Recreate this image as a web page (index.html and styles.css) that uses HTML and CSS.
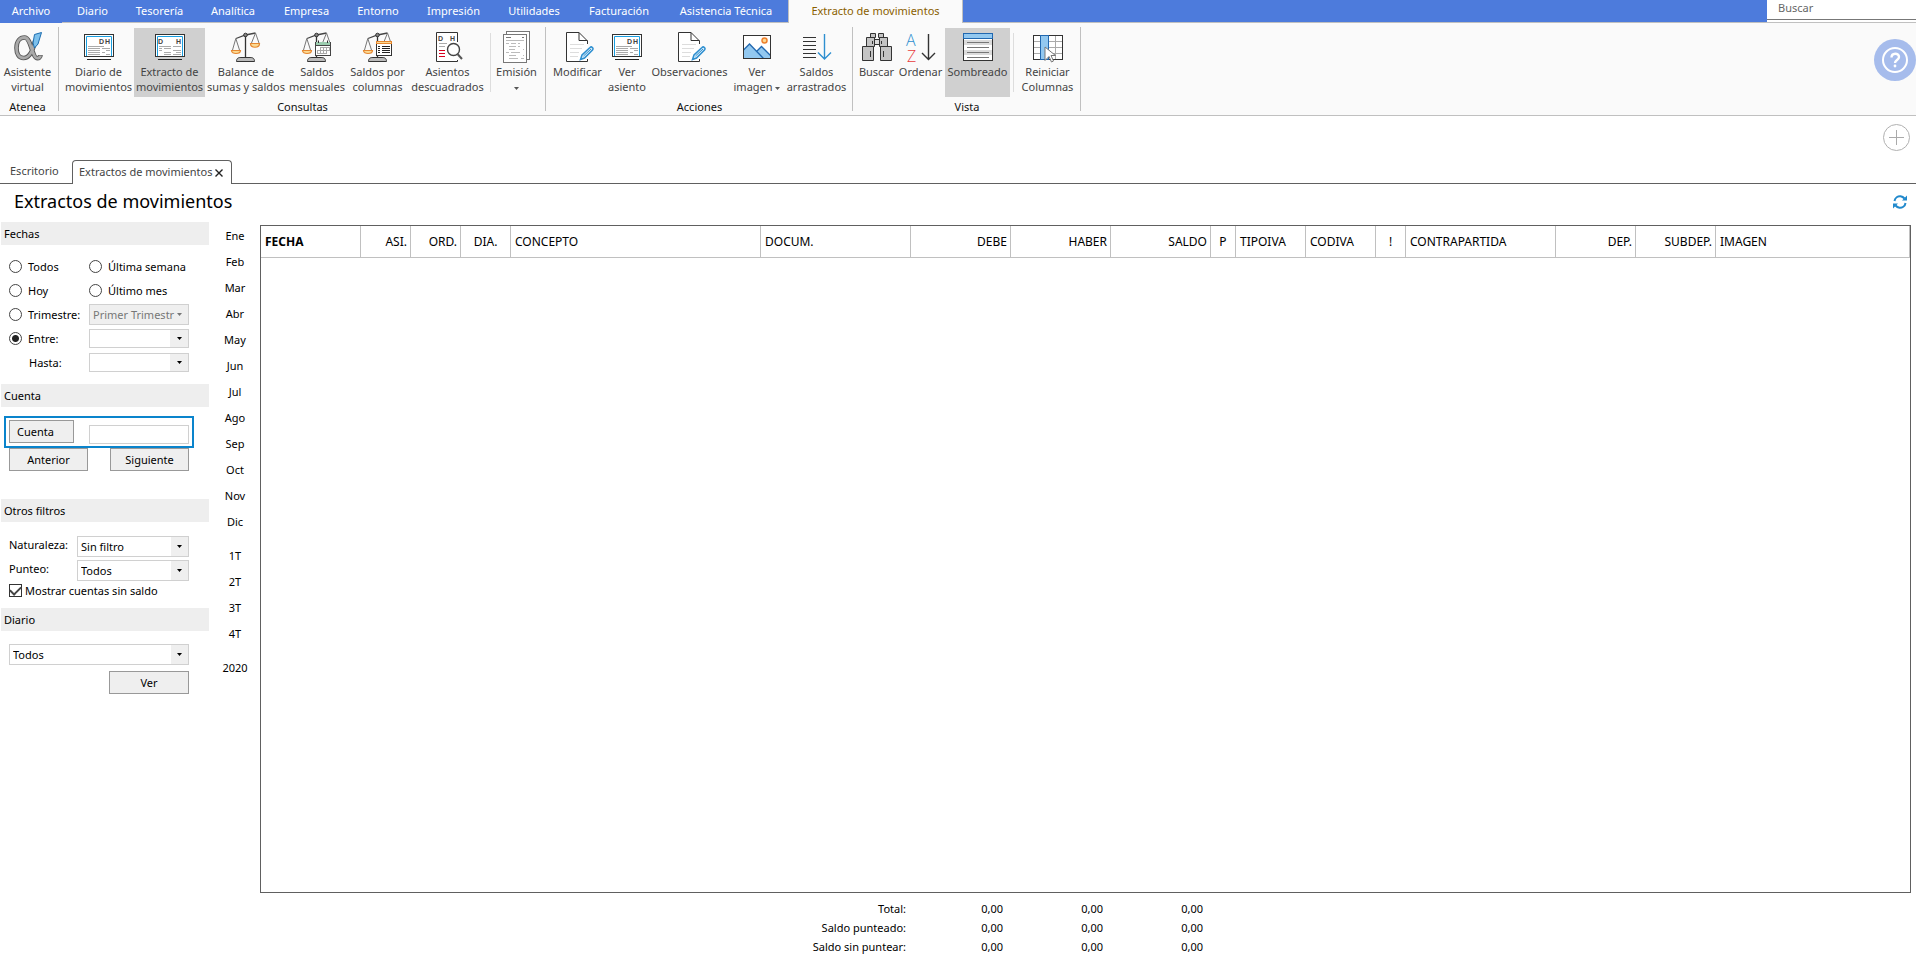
FILE: index.html
```html
<!DOCTYPE html>
<html lang="es">
<head>
<meta charset="utf-8">
<title>Extractos de movimientos</title>
<link rel="stylesheet" href="styles.css">
</head>
<body>
<svg class="defs" aria-hidden="true">
  <symbol id="entry-frame" viewBox="0 0 32 34">
    <rect x="1.500" y="4.500" width="29" height="22" fill="#fff" stroke="#333"/>
    <path d="M3.500 26V6.500H28.500V26" fill="none" stroke="#1a9fe0"/>
    <path d="M4 29.500H28" stroke="#222"/>
  </symbol>
  <symbol id="journal" viewBox="0 0 32 34">
    <use href="#entry-frame"/>
    <text x="16" y="14" class="mini">D</text><text x="22" y="14" class="mini">H</text>
    <path d="M5 16.500H21M5 18.500H17M19 18.500H27M5 20.500H17M5 22.500H17M23 20.500H27M19 22.500H22M5 24.500H17M23 24.500H27" stroke="#aaa"/>
  </symbol>
  <symbol id="ledger" viewBox="0 0 32 34">
    <use href="#entry-frame"/>
    <text x="4" y="14" class="mini">D</text><text x="22" y="14" class="mini">H</text>
    <path d="M5 16.500H17M19 16.500H27M5 18.500H8M10 18.500H17M19 20.500H27M5 20.500H8M10 22.500H17M10 24.500H17M19 24.500H27M22 22.500H27" stroke="#aaa"/>
  </symbol>
  <symbol id="scale-left" viewBox="0 0 32 34">
    <path d="M6 8.500L15.500 5L25.500 3" fill="none" stroke="#444" stroke-width="1.300"/>
    <path d="M5.800 8.500L2.500 20M5.800 8.500L9.500 20M25.500 3L21.500 13M25.500 3L29 13" fill="none" stroke="#777"/>
    <path d="M1.500 20.500H10.500C10.500 24.500 1.500 24.500 1.500 20.500Z" fill="#fbd992" stroke="#e58730" stroke-width="1.200"/>
    <path d="M15.500 5V27" stroke="#333" stroke-width="1.300"/>
    <circle cx="15.500" cy="5" r="1.800" fill="#888" stroke="#333"/>
    <path d="M6.500 31.500C6.500 28 8.500 27.500 11 27.500H20C22.500 27.500 24.500 28 24.500 31.500Z" fill="#bbb" stroke="#333"/>
  </symbol>
  <symbol id="scale" viewBox="0 0 32 34">
    <use href="#scale-left"/>
    <path d="M20.500 13.500H29.500C29.500 18.500 20.500 18.500 20.500 13.500Z" fill="#fbd992" stroke="#e58730" stroke-width="1.200"/>
  </symbol>
  <symbol id="scale-month" viewBox="0 0 32 34">
    <use href="#scale-left"/>
    <rect x="14.500" y="12.500" width="15" height="13" fill="#fff" stroke="#444"/>
    <rect x="15" y="12" width="14" height="3" fill="#9ccdb0"/>
    <path d="M14 15.500H30" stroke="#444"/>
    <path d="M17.500 10.500V13M26.500 10.500V13" stroke="#333"/>
    <path d="M19 17.500H28M16 20.500H28M16 23.500H25M16.500 20V24M19.500 17V24M22.500 17V24M25.500 17V24M28.500 17V21" fill="none" stroke="#aaa"/>
  </symbol>
  <symbol id="scale-columns" viewBox="0 0 32 34">
    <use href="#scale-left"/>
    <rect x="14.500" y="12.500" width="15" height="13" fill="#fff" stroke="#333"/>
    <rect x="14.500" y="11.500" width="15" height="2" fill="#fbd992" stroke="#e58730"/>
    <path d="M16 16.500H18M20 16.500H28M16 18.500H18M20 18.500H28M16 20.500H18M20 20.500H28M16 22.500H18M20 22.500H28" stroke="#222"/>
  </symbol>
  <symbol id="unbalanced" viewBox="0 0 32 34">
    <path d="M25.500 12V2.500H4.500V31.500H25.500V30" fill="#fff" stroke="#333"/>
    <text x="6" y="11" class="mini">D</text><text x="18" y="11" class="mini">H</text>
    <path d="M7 13.500H15M7 16.500H13" stroke="#aaa"/>
    <path d="M7 20.500H13M7 23.500H13M7 26.500H13" stroke="#d9001f"/>
    <circle cx="21.500" cy="19.500" r="6" fill="#fff" stroke="#444" stroke-width="1.400"/>
    <path d="M25.500 24L30 29" stroke="#555" stroke-width="2"/>
  </symbol>
  <symbol id="documents" viewBox="0 0 32 34">
    <rect x="5.500" y="1.500" width="23" height="28" fill="#fff" stroke="#777"/>
    <rect x="2.500" y="4.500" width="23" height="28" fill="#fff" stroke="#777"/>
    <path d="M5 7.500H10M21 7.500H23" stroke="#777"/>
    <path d="M5 10.500H23M5 13.500H8M10 13.500H15M17 13.500H19M8 16.500H15M17 16.500H19M22 19.500H23M8 19.500H14M5 22.500H8M10 22.500H19M8 25.500H15M22 25.500H23M8 28.500H17M20 28.500H23" stroke="#bbb"/>
  </symbol>
  <symbol id="edit" viewBox="0 0 32 34">
    <path d="M25.500 14V11L17 2.500H4.500V31.500H25.500V29" fill="#fff" stroke="#333"/>
    <path d="M17 2.500V10.500H25.500" fill="none" stroke="#333"/>
    <path d="M8 14.500H22M8 18.500H20M8 22.500H17M8 26.500H16" stroke="#ddd"/>
    <path d="M18.500 29.500L20 25L28 17.500C29.500 16 32 18 30.500 20L22.500 28Z" fill="#d8ecf9" stroke="#2e8fd0" stroke-width="1.500"/>
    <path d="M21.500 26L29 19" stroke="#2e8fd0"/>
  </symbol>
  <symbol id="image" viewBox="0 0 32 34">
    <rect x="2.500" y="5.500" width="27" height="23" fill="#fff"/>
    <path d="M2.500 20L8.500 14L15.500 21.500L20.500 16.500L29.500 25.500V28.500H2.500Z" fill="#92c8f0"/>
    <path d="M2.500 20L8.500 14L22.500 28.500M15.500 21.500L20.500 16.500L29.500 25.500" fill="none" stroke="#2168b0" stroke-width="1.300"/>
    <circle cx="23.500" cy="10.500" r="2.500" fill="#fbd992" stroke="#ee7f2d" stroke-width="1.500"/>
    <rect x="2.500" y="5.500" width="27" height="23" fill="none" stroke="#333"/>
  </symbol>
  <symbol id="carried" viewBox="0 0 32 34">
    <path d="M2 7.500H15M2 11.500H15M2 15.500H15M2 19.500H15M2 23.500H15M2 27.500H15" stroke="#333"/>
    <path d="M23.500 4V29M17 22.500L23.500 29L30 22.500" fill="none" stroke="#2e8fd0" stroke-width="1.400"/>
  </symbol>
  <symbol id="binoculars" viewBox="0 0 32 34">
    <g fill="#c4c4c4" stroke="#333">
      <path d="M13.500 9.500H18.500V14.500H13.500Z" fill="#ddd"/>
      <path d="M9.500 3.500H14.500V7.500H9.500ZM17.500 3.500H22.500V7.500H17.500Z"/>
      <path d="M5.500 7.500H13.500V16.500H5.500ZM18.500 7.500H26.500V16.500H18.500Z"/>
      <path d="M1.500 16.500H12.500V30.500H1.500ZM19.500 16.500H30.500V30.500H19.500Z"/>
      <path d="M9.500 21V27M22.500 21V27M11.500 11V14M20.500 11V14" fill="none"/>
    </g>
  </symbol>
  <symbol id="sort" viewBox="0 0 32 34">
    <text x="1" y="16" class="sort-letter" fill="#2e8fd0">A</text>
    <text x="2" y="32" class="sort-letter" fill="#e83c3c">Z</text>
    <path d="M23.500 4V29.500M17 23L23.500 29.500L30 23" fill="none" stroke="#333" stroke-width="1.400"/>
  </symbol>
  <symbol id="shading" viewBox="0 0 32 34">
    <rect x="1.500" y="3.500" width="29" height="27" fill="#fff" stroke="#333"/>
    <path d="M2 10H30V15H2ZM2 20H30V25H2Z" fill="#dcdcdc"/>
    <rect x="1.500" y="3.500" width="29" height="5" fill="#92c8f0" stroke="#2168b0"/>
    <path d="M5 12.500H27M5 17.500H27M5 22.500H27M5 27.500H27" stroke="#777"/>
  </symbol>
  <symbol id="reset-columns" viewBox="0 0 32 34">
    <rect x="1.500" y="5.500" width="29" height="24" fill="#fff" stroke="#333"/>
    <path d="M2 11.500H30M2 17.500H30M2 23.500H30M23.500 6V29" stroke="#aaa"/>
    <rect x="8.500" y="5.500" width="8" height="24" fill="#92c8f0" stroke="#2168b0"/>
    <path d="M13 17L23.500 25.500H19L21.500 31L19.500 32L17 26.500L13 30.500Z" fill="#fff" stroke="#777"/>
  </symbol>
  <symbol id="assistant" viewBox="0 0 32 34">
    <path d="M23 11C20 25 16 28 11.500 28C7 28 4.500 24 4.500 18C4.500 11 8 7.500 12.500 7.500C19 7.500 20 27 24.500 28C27 28.500 28.500 27 28.500 25" fill="none" stroke="#555" stroke-width="4.600"/>
    <path d="M23 11C20 25 16 28 11.500 28C7 28 4.500 24 4.500 18C4.500 11 8 7.500 12.500 7.500C19 7.500 20 27 24.500 28C27 28.500 28.500 27 28.500 25.500" fill="none" stroke="#aaa" stroke-width="2.800"/>
    <path d="M22.500 4.500L29.500 2.500L26 14L22.500 18L21 13Z" fill="#7cc0ec" stroke="#1c6db0"/>
  </symbol>
  <symbol id="caret" viewBox="0 0 5 3"><path d="M0 0H5L2.500 3Z" fill="currentColor"/></symbol>
</svg>

<header>
  <div class="menubar">
    <nav class="menu" aria-label="Menú principal">
      <a href="#archivo">Archivo</a><a href="#diario">Diario</a><a href="#tesoreria">Tesorería</a><a href="#analitica">Analítica</a><a href="#empresa">Empresa</a><a href="#entorno">Entorno</a><a href="#impresion">Impresión</a><a href="#utilidades">Utilidades</a><a href="#facturacion">Facturación</a><a href="#asistencia">Asistencia Técnica</a><a href="#extracto" class="current" aria-current="page">Extracto de movimientos</a>
    </nav>
    <div class="search"><input type="search" placeholder="Buscar" aria-label="Buscar"></div>
  </div>
  <div class="ribbon">
    <section class="group group-atenea">
      <div class="tools">
        <button class="tool"><svg><use href="#assistant"/></svg><span>Asistente<br>virtual</span></button>
      </div>
      <h2>Atenea</h2>
    </section>
    <section class="group group-consultas">
      <div class="tools">
        <button class="tool"><svg><use href="#journal"/></svg><span>Diario de<br>movimientos</span></button>
        <button class="tool pressed" aria-pressed="true"><svg><use href="#ledger"/></svg><span>Extracto de<br>movimientos</span></button>
        <button class="tool"><svg><use href="#scale"/></svg><span>Balance de<br>sumas y saldos</span></button>
        <button class="tool"><svg><use href="#scale-month"/></svg><span>Saldos<br>mensuales</span></button>
        <button class="tool"><svg><use href="#scale-columns"/></svg><span>Saldos por<br>columnas</span></button>
        <button class="tool"><svg><use href="#unbalanced"/></svg><span>Asientos<br>descuadrados</span></button>
        <span class="divider"></span>
        <button class="tool"><svg><use href="#documents"/></svg><span>Emisión<br><svg class="caret"><use href="#caret"/></svg></span></button>
      </div>
      <h2>Consultas</h2>
    </section>
    <section class="group group-acciones">
      <div class="tools">
        <button class="tool"><svg><use href="#edit"/></svg><span>Modificar</span></button>
        <button class="tool"><svg><use href="#journal"/></svg><span>Ver<br>asiento</span></button>
        <button class="tool"><svg><use href="#edit"/></svg><span>Observaciones</span></button>
        <button class="tool"><svg><use href="#image"/></svg><span>Ver<br>imagen <svg class="caret"><use href="#caret"/></svg></span></button>
        <button class="tool"><svg><use href="#carried"/></svg><span>Saldos<br>arrastrados</span></button>
      </div>
      <h2>Acciones</h2>
    </section>
    <section class="group group-vista">
      <div class="tools">
        <button class="tool"><svg><use href="#binoculars"/></svg><span>Buscar</span></button>
        <button class="tool"><svg><use href="#sort"/></svg><span>Ordenar</span></button>
        <button class="tool pressed" aria-pressed="true"><svg><use href="#shading"/></svg><span>Sombreado</span></button>
        <span class="divider"></span>
        <button class="tool"><svg><use href="#reset-columns"/></svg><span>Reiniciar<br>Columnas</span></button>
      </div>
      <h2>Vista</h2>
    </section>
    <button class="help" aria-label="Ayuda"><svg viewBox="0 0 42 42"><circle cx="21" cy="21" r="21" fill="#a6bcec"/><circle cx="21" cy="21" r="12" fill="none" stroke="#fff" stroke-width="2"/><path d="M17.500 18.500C17.500 13.500 25 13.500 25 18C25 21 21 21 21 24" fill="none" stroke="#fff" stroke-width="2.400"/><circle cx="21" cy="27" r="1.400" fill="#fff"/></svg></button>
  </div>
</header>

<div class="tabstrip">
  <div class="tabs">
    <a href="#escritorio" class="tab">Escritorio</a>
    <div class="tab active"><a href="#extractos">Extractos de movimientos</a><button aria-label="Cerrar"><svg viewBox="0 0 8 8"><path d="M0.500 0.500L7.500 7.500M7.500 0.500L0.500 7.500" stroke="#222" stroke-width="1.400"/></svg></button></div>
  </div>
  <button class="add" aria-label="Añadir"><svg viewBox="0 0 27 27"><circle cx="13.500" cy="13.500" r="13" fill="none" stroke="#b0b0b0"/><path d="M6 13.500H21M13.500 6V21" stroke="#aaa"/></svg></button>
</div>

<div class="titlebar">
  <h1>Extractos de movimientos</h1>
  <button class="refresh" aria-label="Actualizar"><svg viewBox="0 0 14 14"><path d="M1.500 6C2 2.500 5 1 7.500 1.200C9.500 1.500 10.500 2.300 11.500 3.500M12.500 8C12 11.500 9 13 6.500 12.800C4.500 12.500 3.500 11.700 2.500 10.500" fill="none" stroke="#2189cc" stroke-width="2"/><path d="M14 0.500V5.500H9ZM0 13.500V8.500H5Z" fill="#2189cc"/></svg></button>
</div>

<main>
  <form class="filters">
    <h2>Fechas</h2>
    <div class="panel dates">
      <label class="choice"><input type="radio" name="rango">Todos</label>
      <label class="choice"><input type="radio" name="rango">Última semana</label>
      <label class="choice"><input type="radio" name="rango">Hoy</label>
      <label class="choice"><input type="radio" name="rango">Último mes</label>
      <label class="choice"><input type="radio" name="rango">Trimestre:</label>
      <div class="combo disabled"><select aria-label="Trimestre" disabled><option>Primer Trimestr</option></select><span class="arrow"><svg><use href="#caret"/></svg></span></div>
      <label class="choice"><input type="radio" name="rango" checked>Entre:</label>
      <div class="datebox"><input type="text" aria-label="Entre"><button type="button" aria-label="Abrir calendario de inicio"><svg><use href="#caret"/></svg></button></div>
      <label class="until" for="hasta">Hasta:</label>
      <div class="datebox"><input type="text" id="hasta"><button type="button" aria-label="Abrir calendario de fin"><svg><use href="#caret"/></svg></button></div>
    </div>
    <h2>Cuenta</h2>
    <div class="panel account">
      <div class="account-pick"><button type="button" class="btn">Cuenta</button><input type="text" aria-label="Cuenta"></div>
      <div class="account-nav"><button type="button" class="btn">Anterior</button><button type="button" class="btn">Siguiente</button></div>
    </div>
    <h2>Otros filtros</h2>
    <div class="panel others">
      <label for="naturaleza">Naturaleza:</label>
      <div class="combo"><select id="naturaleza"><option>Sin filtro</option></select><span class="arrow"><svg><use href="#caret"/></svg></span></div>
      <label for="punteo">Punteo:</label>
      <div class="combo"><select id="punteo"><option>Todos</option></select><span class="arrow"><svg><use href="#caret"/></svg></span></div>
      <label class="check"><input type="checkbox" checked>Mostrar cuentas sin saldo</label>
    </div>
    <h2>Diario</h2>
    <div class="panel journal">
      <div class="combo"><select aria-label="Diario"><option>Todos</option></select><span class="arrow"><svg><use href="#caret"/></svg></span></div>
      <button type="button" class="btn">Ver</button>
    </div>
  </form>

  <nav class="periods" aria-label="Periodos">
    <div><a href="#ene">Ene</a><a href="#feb">Feb</a><a href="#mar">Mar</a><a href="#abr">Abr</a><a href="#may">May</a><a href="#jun">Jun</a><a href="#jul">Jul</a><a href="#ago">Ago</a><a href="#sep">Sep</a><a href="#oct">Oct</a><a href="#nov">Nov</a><a href="#dic">Dic</a></div>
    <div><a href="#1t">1T</a><a href="#2t">2T</a><a href="#3t">3T</a><a href="#4t">4T</a></div>
    <div><a href="#2020">2020</a></div>
  </nav>

  <div class="results">
    <div class="sheet">
      <table class="entries">
        <colgroup><col class="w100"><col class="w50"><col class="w50"><col class="w50"><col class="w250"><col class="w150"><col class="w100"><col class="w100"><col class="w100"><col class="w25"><col class="w70"><col class="w70"><col class="w30"><col class="w150"><col class="w80"><col class="w80"><col></colgroup>
        <thead><tr>
          <th class="sorted">FECHA</th><th class="num">ASI.</th><th class="num">ORD.</th><th class="mid">DIA.</th><th>CONCEPTO</th><th>DOCUM.</th><th class="num">DEBE</th><th class="num">HABER</th><th class="num">SALDO</th><th class="mid">P</th><th>TIPOIVA</th><th>CODIVA</th><th class="mid">!</th><th>CONTRAPARTIDA</th><th class="num">DEP.</th><th class="num">SUBDEP.</th><th>IMAGEN</th>
        </tr></thead>
      </table>
    </div>
    <table class="totals">
      <tr><th scope="row">Total:</th><td>0,00</td><td>0,00</td><td>0,00</td></tr>
      <tr><th scope="row">Saldo punteado:</th><td>0,00</td><td>0,00</td><td>0,00</td></tr>
      <tr><th scope="row">Saldo sin puntear:</th><td>0,00</td><td>0,00</td><td>0,00</td></tr>
    </table>
  </div>
</main>
</body>
</html>
```
FILE: styles.css
```css
* { box-sizing: border-box; }
body {
  margin: 0;
  min-height: 100vh;
  display: flex;
  flex-direction: column;
  background: #fff;
  color: #000;
  font: 11px/15px "Noto Sans", "Open Sans", sans-serif;
}
button, input, select { font: inherit; color: inherit; margin: 0; padding: 0; border-radius: 0; }
button { border: 0; background: none; }
a { color: inherit; text-decoration: none; }
h1, h2 { margin: 0; font-size: 11px; font-weight: 400; }
.defs { display: none; }
.mini { font: 700 7px "Liberation Sans", sans-serif; fill: #444; }
.sort-letter { font: 300 16px "Open Sans", sans-serif; }

/* Menu */
.menubar { display: flex; justify-content: space-between; height: 23px; background: #4d7bdc; border-bottom: 1px solid #c0c0c0; }
.menu { display: grid; grid-template-columns: 62px 61px 73px 74px 73px 70px 81px 80px 90px 124px 175px; height: 23px; }
.menu a { color: #fff; text-align: center; line-height: 22px; white-space: nowrap; }
.menu a:first-child { background: #4d7bdc; }
.menu .current { background: #fafafa; color: #8a5f00; border: solid #c0c0c0; border-width: 0 1px; }
.search { width: 149px; background: #fff; }
.search input { display: block; width: 100%; height: 20px; padding: 0 11px 4px; border: 0; border-bottom: 1px solid #777; background: #fff; outline: 0; }
.search input::placeholder { color: #666; opacity: 1; }

/* Ribbon */
.ribbon { position: relative; display: flex; background: #fafafa; border-bottom: 1px solid #c0c0c0; padding: 4px 0; }
.group { height: 84px; padding: 1px 3px 0 4px; border-right: 1px solid #c0c0c0; color: #444; }
.group h2 { line-height: 20px; text-align: center; color: #111; }
.tools { display: grid; height: 69px; }
.tool { display: flex; flex-direction: column; align-items: center; justify-content: flex-start; height: 69px; padding: 2px 0 0; white-space: nowrap; text-align: center; }
.tool svg { display: block; flex: none; width: 32px; height: 34px; }
.tool .caret { display: inline-block; width: 5px; height: 3px; vertical-align: middle; color: #555; }
.tool.pressed { background: #d0d0d0; }
.divider { width: 1px; height: 59px; margin: 5px 0 0 3px; background: #ddd; }
.group-atenea { padding: 1px 3px 0 0; }
.group-atenea .tools { grid-template-columns: 55px; }
.group-consultas .tools { grid-template-columns: 71px 71px 82px 60px 61px 79px 4px 51px; }
.group-acciones .tools { grid-template-columns: 55px 44px 81px 54px 65px; }
.group-vista .tools { grid-template-columns: 39px 49px 65px 8px 59px; }
.help { position: absolute; right: 0; top: 16px; width: 42px; height: 42px; }
.help svg, .add svg, .refresh svg { display: block; width: 100%; height: 100%; }

/* Document tabs */
.tabstrip { display: flex; justify-content: space-between; height: 68px; border-bottom: 1px solid #606060; color: #444; }
.tabs { display: flex; align-items: flex-end; height: 68px; }
.tab { width: 72px; height: 24px; padding-left: 10px; line-height: 22px; white-space: nowrap; }
.tab.active { display: flex; align-items: center; justify-content: space-between; width: 160px; padding: 0 8px 0 6px; border: 1px solid #606060; border-bottom: 0; border-radius: 4px 4px 0 0; background: #fff; }
.tab.active a { margin-bottom: 1px; }
.tab button { width: 8px; height: 8px; }
.tab svg { display: block; }
.add { width: 27px; height: 27px; margin: 8px 6px 0 0; }
.titlebar { display: flex; align-items: center; justify-content: space-between; height: 38px; padding: 0 9px 3px 14px; }
h1 { font-size: 18px; line-height: 35px; }
.refresh { width: 14px; height: 14px; }

/* Filters */
main { flex: 1; display: grid; grid-template-columns: 209px 52px minmax(0, 1fr); padding-right: 5px; }
.filters h2 { height: 23px; margin-left: 1px; padding-left: 3px; line-height: 23px; background: #eee; }
.panel { padding: 0 20px 0 9px; }
.btn { height: 23px; border: 1px solid #999; background: #efefef; }
.filters input[type="text"] { min-width: 0; border: 1px solid #d0d0d0; background: #fff; }
.dates { display: grid; grid-template-columns: 80px 100px; grid-auto-rows: 24px; align-items: center; height: 139px; padding-top: 9px; }
.choice { display: flex; align-items: center; gap: 6px; white-space: nowrap; }
.choice input { appearance: none; flex: none; width: 13px; height: 13px; border: 1px solid #444; border-radius: 50%; background: #fff; }
.choice input:checked { background: radial-gradient(circle, #222 3px, #fff 4px); }
.until { padding-left: 20px; }
.combo { display: grid; grid-template-columns: minmax(0, 1fr) 17px; height: 21px; border: 1px solid #d0d0d0; background: #fff; }
.combo select { grid-area: 1 / 1 / 2 / 3; appearance: none; border: 0; padding: 0 3px; background: transparent; opacity: 1; }
.arrow { grid-area: 1 / 2; display: grid; place-items: center; background: #efefef; pointer-events: none; }
.arrow svg, .datebox svg { display: block; width: 5px; height: 3px; }
.combo.disabled { background: #efefef; color: #777; }
.combo.disabled .arrow { background: none; }
.datebox { display: grid; grid-template-columns: minmax(0, 1fr) 19px; height: 19px; }
.datebox input[type="text"] { border-right: 0; }
.datebox button { display: grid; place-items: center; border: 1px solid #d0d0d0; border-left: 0; background: #efefef; }
.account { height: 92px; padding: 9px 15px 0 4px; }
.account-pick { display: flex; justify-content: space-between; align-items: flex-end; height: 32px; padding: 2px 3px; border: 2px solid #0a84cc; }
.account-pick .btn { width: 65px; padding-right: 12px; align-self: flex-start; }
.account-pick input { width: 100px; height: 19px; }
.account-nav { display: flex; justify-content: space-between; padding: 0 5px; }
.account-nav .btn { width: 79px; }
.others { display: grid; grid-template-columns: 68px 112px; grid-template-rows: 24px 24px 13px; height: 86px; padding-top: 14px; }
.others > label { line-height: 17px; }
.others .check { grid-column: 1 / 3; display: flex; align-items: center; gap: 3px; line-height: 13px; }
.check input { appearance: none; width: 13px; height: 13px; border: 1px solid #333; background: #fff; display: grid; place-items: center; }
.check input:checked::before { content: ""; width: 9px; height: 5px; border: solid #444; border-width: 0 0 2px 2px; transform: translateY(-1px) rotate(-45deg); }
.journal { display: grid; gap: 6px; padding-top: 13px; }
.journal .btn { width: 80px; justify-self: end; }

/* Periods */
.periods { display: flex; flex-direction: column; gap: 8px; padding-top: 1px; }
.periods a { display: block; line-height: 26px; text-align: center; }

/* Results */
.results { display: flex; flex-direction: column; margin-left: -1px; padding-top: 3px; }
.sheet { flex: 1; border: 1px solid #606060; }
.entries { width: 100%; table-layout: fixed; border-collapse: separate; border-spacing: 0; font-size: 12px; }
.entries th { height: 32px; padding: 0 4px; border-right: 1px solid #c0c0c0; border-bottom: 1px solid #c0c0c0; text-align: left; font-weight: 400; white-space: nowrap; }
.entries th.sorted { font-weight: 700; }
.entries th.num { padding-right: 3px; text-align: right; }
.entries th.mid { text-align: center; }
.w25 { width: 25px; }
.w30 { width: 30px; }
.w50 { width: 50px; }
.w70 { width: 70px; }
.w80 { width: 80px; }
.w100 { width: 100px; }
.w150 { width: 150px; }
.w250 { width: 250px; }
.totals { width: 943px; margin: 6px 0 0; border-collapse: collapse; }
.totals th, .totals td { height: 19px; padding: 0; text-align: right; font-weight: 400; }
.totals td { width: 100px; }
.totals td:nth-child(2) { width: 97px; }
```
